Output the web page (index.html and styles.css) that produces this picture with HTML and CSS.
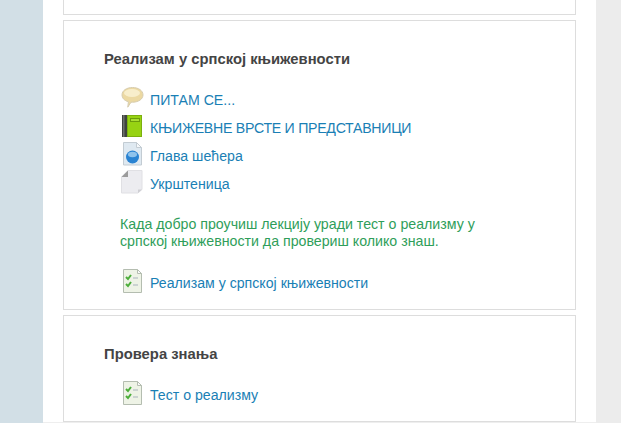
FILE: index.html
```html
<!DOCTYPE html>
<html lang="en">
<head>
  <meta charset="UTF-8" />
  <title>Реализам у српској књижевности</title>
  <link rel="stylesheet" href="styles.css">
</head>
<body>
  <div class="page">
    <div class="section section-cut"></div>

    <div class="section section-main">
      <h3 class="section-title">Реализам у српској књижевности</h3>
      <ul class="activities">
        <li class="activity">
          <svg class="icon" viewBox="0 0 24 24"><path d="M12.500 1.500c6 0 10.500 3.100 10.500 7.400 0 4.200-4.500 7.300-10.500 7.300l-1.500 0-3.200 5 .6-5.500C4.400 14.700 2 12.100 2 8.900 2 4.600 6.500 1.500 12.500 1.500z" fill="#ecd9a2" stroke="#d6ccb0"/><ellipse cx="12" cy="7" rx="8" ry="4" fill="#f8eecb"/></svg>
          <a href="#">ПИТАМ СЕ...</a>
        </li>
        <li class="activity">
          <svg class="icon" viewBox="0 0 24 24"><rect x="2" y="1" width="5" height="22" fill="#3f433f"/><rect x="3" y="1" width="1.500" height="22" fill="#6c706c"/><rect x="7" y="1" width="15" height="22" fill="#97d313"/><rect x="7.500" y="1.500" width="14" height="21" fill="none" stroke="#7cb00e"/><rect x="10.500" y="4.500" width="9" height="3" fill="#a9de32" stroke="#6c9c0c"/></svg>
          <a href="#" class="caps">КЊИЖЕВНЕ ВРСТЕ И ПРЕДСТАВНИЦИ</a>
        </li>
        <li class="activity">
          <svg class="icon" viewBox="0 0 24 24"><path d="M3.500.5h13l5 5v17.500h-18z" fill="#dfe9f1" stroke="#c3ccd3"/><path d="M16.500.5v5h5z" fill="#f6f8fa" stroke="#c3ccd3"/><circle cx="12.500" cy="15" r="6.500" fill="#2a83d2"/><ellipse cx="12.500" cy="12.500" rx="4.500" ry="2.800" fill="#8fc3ec"/></svg>
          <a href="#">Глава шећера</a>
        </li>
        <li class="activity">
          <svg class="icon" viewBox="0 0 24 24"><path d="M8 .5h14v19l-4 3.500H1.500V7z" fill="#ececf0" stroke="#e0e0e4"/><path d="M8 .5v6.500H1.500z" fill="#9b9b9b"/><path d="M22 19.500h-4v3.500z" fill="#cfcfd4"/></svg>
          <a href="#">Укрштеница</a>
        </li>
      </ul>
      <p class="note">Када добро проучиш лекцију уради тест о реализму у<br>српској књижевности да провериш колико знаш.</p>
      <ul class="activities">
        <li class="activity">
          <svg class="icon" viewBox="0 0 24 24"><use href="#quiz-icon"/></svg>
          <a href="#">Реализам у српској књижевности</a>
        </li>
      </ul>
    </div>

    <div class="section section-check">
      <h3 class="section-title">Провера знања</h3>
      <ul class="activities">
        <li class="activity">
          <svg class="icon" viewBox="0 0 24 24">
            <g id="quiz-icon">
              <path d="M3.500.5h14l4 4v19h-18z" fill="#eef3e6" stroke="#b4bdb0"/>
              <path d="M17.500.5v4h4z" fill="#fafafa" stroke="#b4bdb0"/>
              <path d="M6 8l2 2 3-4M6 15l2 2 3-4" fill="none" stroke="#4cae3a" stroke-width="2"/>
              <path d="M13 9h5M13 16h5" stroke="#a9b3bc"/>
            </g>
          </svg>
          <a href="#">Тест о реализму</a>
        </li>
      </ul>
    </div>
  </div>
</body>
</html>
```

FILE: styles.css
```css
html, body {
  margin: 0;
  padding: 0;
  height: 423px;
  overflow: hidden;
}

body {
  background-color: #ececec;
  background-image: linear-gradient(#d2dfe6, #d2dfe6);
  background-repeat: no-repeat;
  background-size: 43px 100%;
  font-family: "Liberation Sans", Arial, sans-serif;
  font-size: 14px;
  color: #444;
}

.page {
  box-sizing: border-box;
  width: 553px;
  height: 423px;
  margin-left: 43px;
  padding: 0 20px;
  background: #fff;
  border-bottom: 1px solid #eee;
  display: flex;
  flex-direction: column;
  gap: 5px;
}

.section {
  box-sizing: border-box;
  border: 1px solid #ddd;
  padding: 0 40px;
}

.section-cut {
  height: 15px;
  border-top: 0;
}

.section-main {
  height: 290px;
  padding-top: 30px;
}

.section-check {
  flex: 1;
  padding-top: 30px;
}

.section-title {
  margin: 0 0 18px;
  font-size: 14.8px;
  line-height: 17px;
  font-weight: bold;
  color: #444;
}

.activities {
  list-style: none;
  margin: 0;
  padding: 0 0 0 16px;
}

.activity {
  display: flex;
  align-items: center;
  gap: 6px;
  height: 28px;
}

.activity a {
  color: #1a7fb5;
  font-size: 14.15px;
  text-decoration: none;
}

.activity a.caps {
  letter-spacing: -0.27px;
}

.icon {
  width: 24px;
  height: 24px;
  flex: none;
  margin-bottom: 4px;
  filter: blur(0.35px);
}

.note {
  margin: 18px 0 19px;
  padding-left: 16px;
  font-size: 14.2px;
  line-height: 17px;
  color: #2f9e5a;
}
```
